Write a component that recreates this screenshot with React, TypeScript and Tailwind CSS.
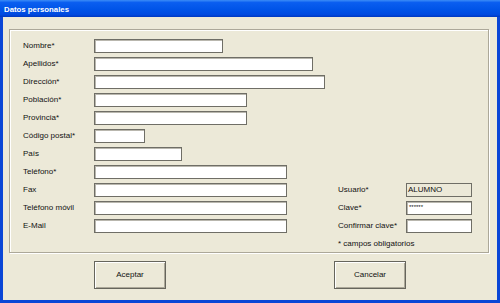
import React from "react";

const font = { fontFamily: '"Liberation Sans", Arial, sans-serif' };

function Field({ w }: { w: string }) {
  return (
    <div
      className={`h-[14px] ${w} bg-white border border-[#6f6e66] shadow-[inset_1px_1px_0_#b9b7ae]`}
    />
  );
}

function Label({ children }: { children: React.ReactNode }) {
  return <div className="h-[14px] flex items-center text-[8px] leading-none text-[#111]">{children}</div>;
}

export default function App() {
  const left: [string, string][] = [
    ["Nombre*", "w-[129px]"],
    ["Apellidos*", "w-[219px]"],
    ["Dirección*", "w-[231px]"],
    ["Población*", "w-[153px]"],
    ["Provincia*", "w-[153px]"],
    ["Código postal*", "w-[51px]"],
    ["País", "w-[88px]"],
    ["Teléfono*", "w-[193px]"],
    ["Fax", "w-[193px]"],
    ["Teléfono móvil", "w-[193px]"],
    ["E-Mail", "w-[193px]"],
  ];
  return (
    <div style={font} className="w-[500px] h-[303px] flex flex-col bg-[#0a46d6] overflow-hidden">
      <div className="h-[17px] shrink-0 flex items-center pl-[4px] pt-[2px] bg-[linear-gradient(to_bottom,#3b8cf7_0%,#0a5ef0_15%,#0054e8_55%,#004ae0_85%,#0038c0_100%)]">
        <span className="text-white font-bold text-[7.8px] leading-none">Datos personales</span>
      </div>
      <div className="flex-1 mx-[3px] mb-[3px] bg-[#ECE9D8] flex flex-col pt-[12px] pl-[6px] pr-[8px]">
        <div className="border border-[#ACA899] shadow-[inset_1px_1px_0_#fff,1px_1px_0_#fff] pt-[9px] pb-[1px] pl-[13px]">
          <div className="grid grid-cols-[71px_244px_68px_66px] gap-y-[4px]">
            {left.map(([label, w], i) => (
              <React.Fragment key={label}>
                <Label>{label}</Label>
                <Field w={w} />
                {i === 8 && (
                  <>
                    <Label>Usuario*</Label>
                    <div className="h-[14px] w-[66px] bg-[#ECE9D8] border border-[#6f6e66] flex items-center text-[8px] leading-none text-[#111] pl-[1px]">
                      ALUMNO
                    </div>
                  </>
                )}
                {i === 9 && (
                  <>
                    <Label>Clave*</Label>
                    <div className="h-[14px] w-[66px] bg-white border border-[#6f6e66] shadow-[inset_1px_1px_0_#b9b7ae] text-[6px] leading-none text-[#111] pl-[2px] pt-[2px]">
                      ******
                    </div>
                  </>
                )}
                {i === 10 && (
                  <>
                    <Label>Confirmar clave*</Label>
                    <Field w="w-[66px]" />
                  </>
                )}
                {i < 8 && (
                  <>
                    <div />
                    <div />
                  </>
                )}
              </React.Fragment>
            ))}
            <div />
            <div />
            <div className="col-span-2 h-[14px] flex items-center text-[8px] leading-none text-[#111]">
              * campos obligatorios
            </div>
          </div>
        </div>
        <div className="flex mt-[8px] pl-[85px]">
          <button className="w-[72px] h-[28px] bg-[#ECE9D8] border border-[#66655c] shadow-[inset_1px_1px_0_#fff,inset_-1px_-1px_0_#aca899] text-[8px] text-[#111]">
            Aceptar
          </button>
          <button className="ml-[168px] w-[72px] h-[28px] bg-[#ECE9D8] border border-[#66655c] shadow-[inset_1px_1px_0_#fff,inset_-1px_-1px_0_#aca899] text-[8px] text-[#111]">
            Cancelar
          </button>
        </div>
      </div>
    </div>
  );
}
